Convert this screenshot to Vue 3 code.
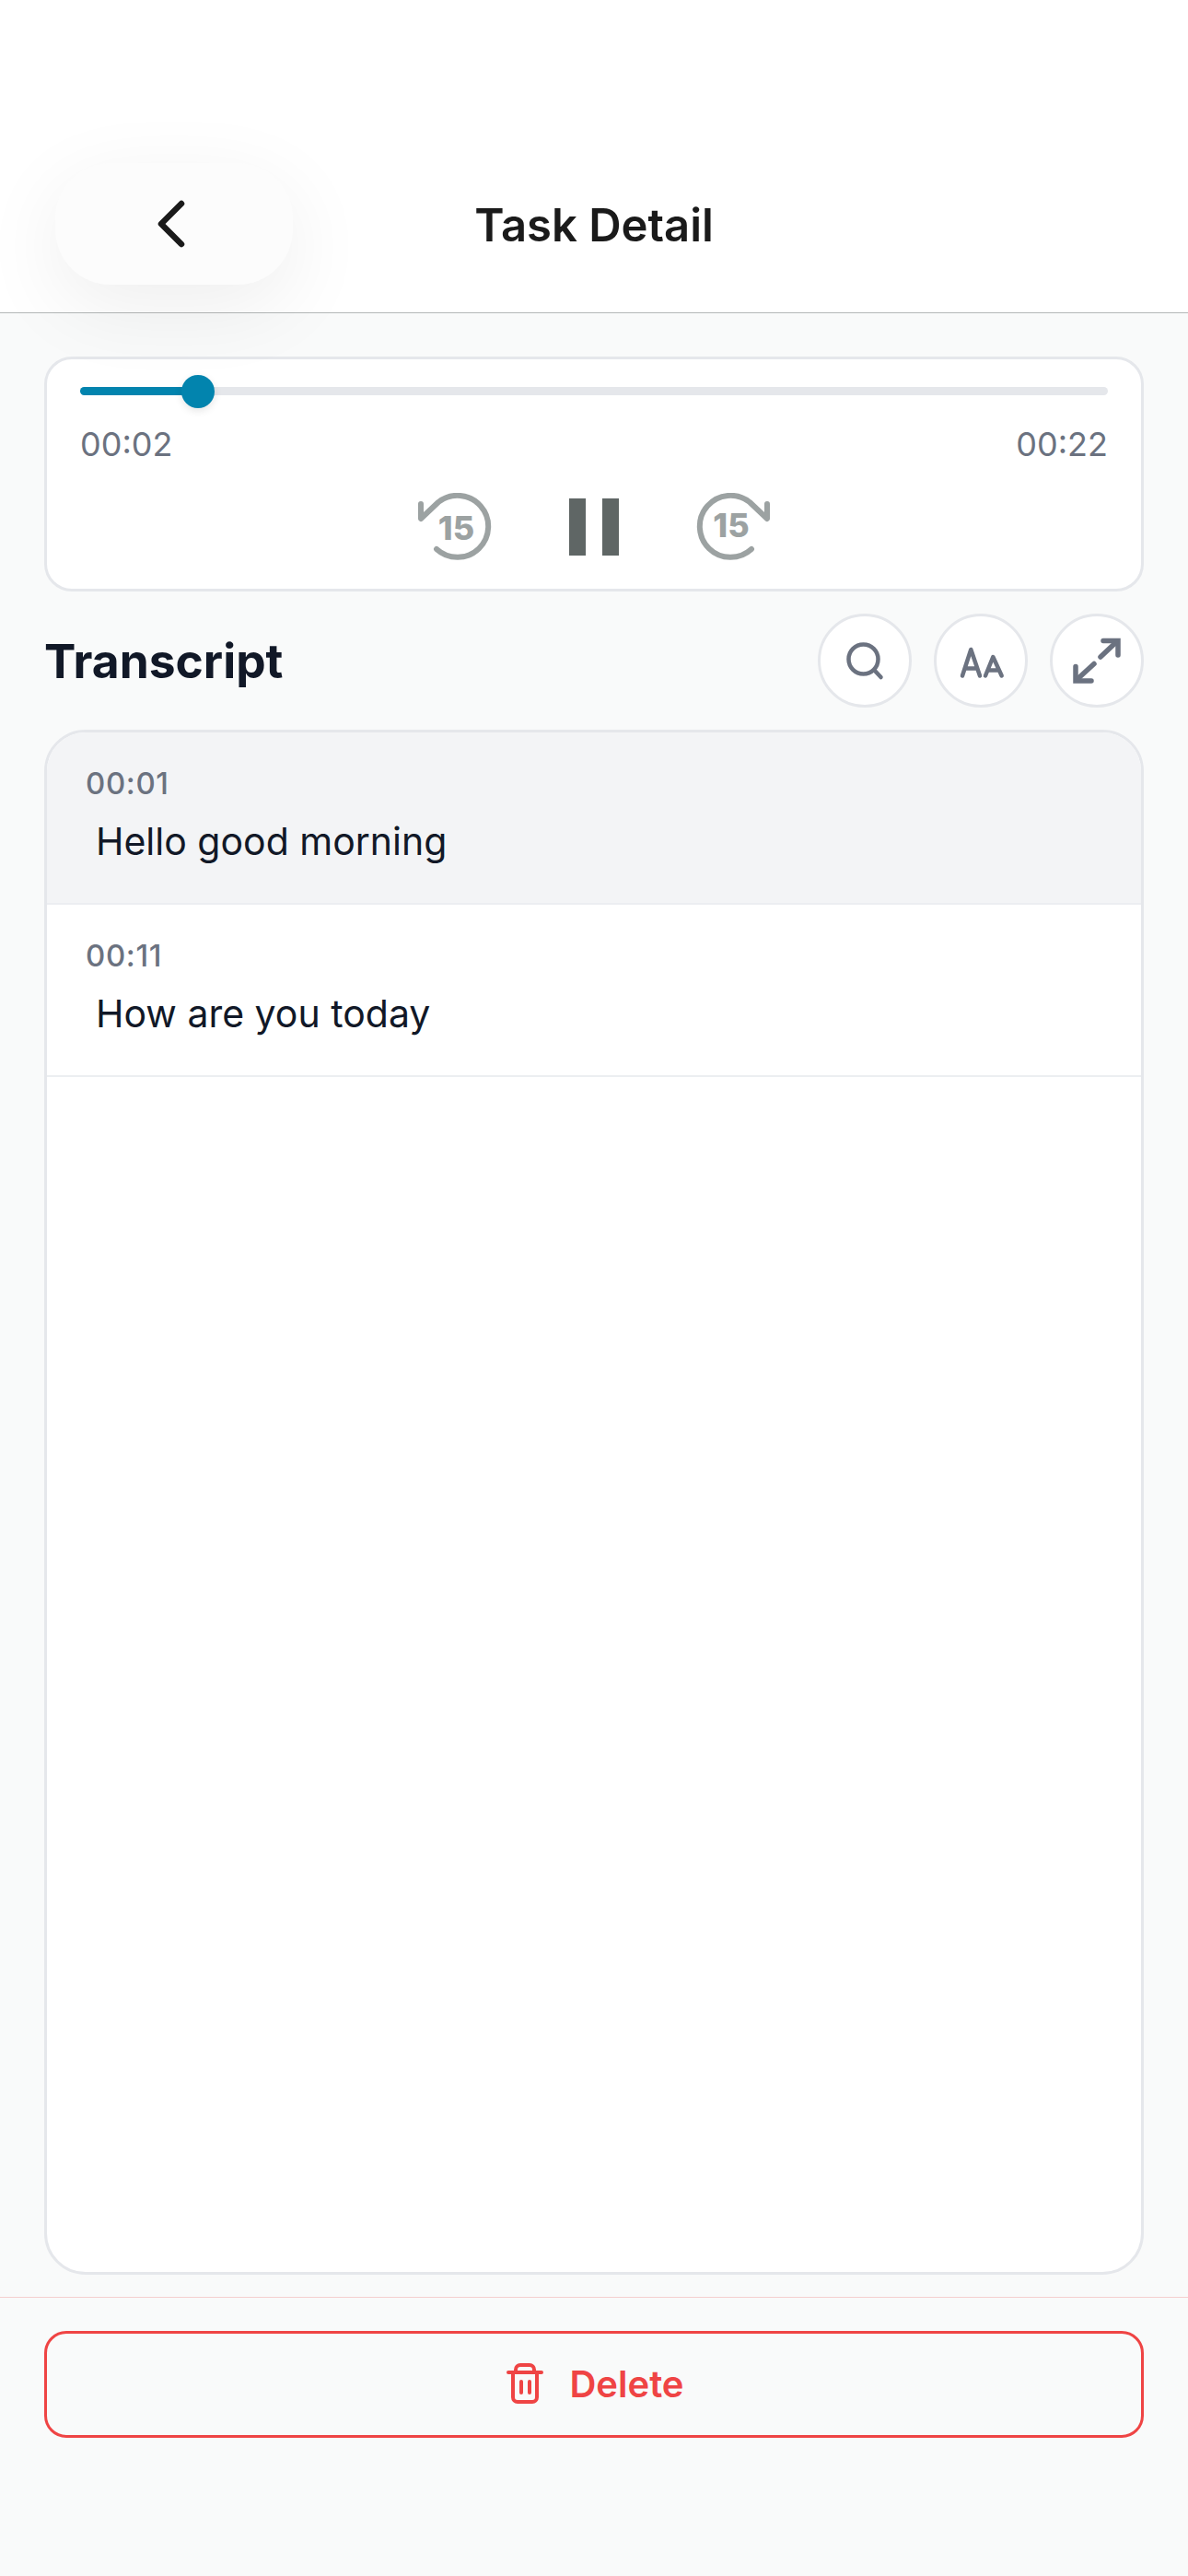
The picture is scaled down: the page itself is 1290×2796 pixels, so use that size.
<template>
  <div class="screen">
    <header class="header">
      <button class="back-btn">
        <svg width="36" height="56" viewBox="0 0 36 56" fill="none">
          <path d="M30 6 L8 28 L30 50" stroke="#1a1a1a" stroke-width="6.5" stroke-linecap="round" stroke-linejoin="round" />
        </svg>
      </button>
      <h1 class="title">Task Detail</h1>
      <div></div>
    </header>

    <main class="content">
      <section class="player">
        <div class="track">
          <div class="track-fill" :style="{ width: progress + 'px' }"></div>
          <div class="track-thumb" :style="{ left: progress - 18 + 'px' }"></div>
        </div>
        <div class="times">
          <span>00:02</span>
          <span>00:22</span>
        </div>
        <div class="controls">
          <svg class="skip" width="81" height="74" viewBox="0 0 81 74" fill="none">
            <path d="M21 61 A33.5 33.5 0 1 0 23 10 L4 28 L4 12" stroke="#9ca2a2" stroke-width="6" stroke-linecap="round" stroke-linejoin="round" />
            <text x="42.5" y="51" class="skip-label">15</text>
          </svg>
          <div class="pause">
            <span></span>
            <span></span>
          </div>
          <svg class="skip" width="81" height="74" viewBox="0 0 81 74" fill="none">
            <path d="M60 61 A33.5 33.5 0 1 1 58 10 L77 28 L77 12" stroke="#9ca2a2" stroke-width="6" stroke-linecap="round" stroke-linejoin="round" />
            <text x="38" y="48" class="skip-label">15</text>
          </svg>
        </div>
      </section>

      <div class="transcript-head">
        <h2>Transcript</h2>
        <div class="tools">
          <button class="tool">
            <svg width="60" height="60" viewBox="0 0 60 60" fill="none" stroke="#6b7280" stroke-linecap="round" stroke-linejoin="round">
              <circle cx="28.5" cy="28.5" r="16" stroke-width="4.5" />
              <path d="M40.5 40.5 L47.5 48" stroke-width="4.5" />
            </svg>
          </button>
          <button class="tool">
            <svg width="60" height="60" viewBox="0 0 60 60" fill="none" stroke="#6b7280" stroke-width="4.5" stroke-linecap="round" stroke-linejoin="round">
              <path d="M10 46.5 L19.3 18 L29 46.5 M13 38.5 H26" />
              <path d="M35 46.5 L43.3 26 L52.7 46.5 M38 40.5 H50" />
            </svg>
          </button>
          <button class="tool">
            <svg width="60" height="60" viewBox="0 0 60 60" fill="none" stroke="#6b7280" stroke-width="5.5" stroke-linecap="round">
              <path d="M37 8.5 H53 V24" />
              <path d="M34 26 L51 10" />
              <path d="M7 36.5 V52 H24" />
              <path d="M27 33.5 L9 50" />
            </svg>
          </button>
        </div>
      </div>

      <section class="transcript">
        <div v-for="(line, index) in lines" :key="line.time" class="line" :class="{ active: index === 0 }">
          <div class="line-time">{{ line.time }}</div>
          <div class="line-text">{{ line.text }}</div>
        </div>
      </section>
    </main>

    <footer class="footer">
      <button class="delete-btn">
        <svg width="40" height="44" viewBox="0 0 40 44" fill="none" stroke="#ef4444" stroke-width="4" stroke-linecap="round" stroke-linejoin="round">
          <path d="M2 10 H38" />
          <path d="M10 10 V7 A5 5 0 0 1 15 2 H25 A5 5 0 0 1 30 7 V10" />
          <path d="M7 10 V37 A5 5 0 0 0 12 42 H28 A5 5 0 0 0 33 37 V10" />
          <path d="M16 20 V32 M25 20 V32" />
        </svg>
        <span>Delete</span>
      </button>
    </footer>
  </div>
</template>

<script setup>
const progress = 128

const lines = [
  { time: '00:01', text: 'Hello good morning' },
  { time: '00:11', text: 'How are you today' }
]
</script>

<style scoped>
.screen {
  width: 1290px;
  height: 2796px;
  display: flex;
  flex-direction: column;
  background: #f9fafa;
  font-family: Inter, "Liberation Sans", sans-serif;
  overflow: hidden;
}

button {
  font-family: inherit;
  padding: 0;
}

.header {
  position: relative;
  z-index: 2;
  height: 340px;
  box-sizing: border-box;
  padding: 177px 60px 0;
  display: grid;
  grid-template-columns: 1fr auto 1fr;
  align-items: start;
  background: #fff;
  border-bottom: 1px solid #b4b8b8;
}

.back-btn {
  width: 258px;
  height: 132px;
  display: flex;
  align-items: center;
  justify-content: center;
  padding-right: 8px;
  border: none;
  border-radius: 60px;
  background: #fcfcfc;
  box-shadow: 0 24px 90px rgba(0, 0, 0, 0.07);
}

.title {
  margin: 0;
  height: 132px;
  line-height: 135px;
  font-size: 49px;
  font-weight: 600;
  color: #1a1a1a;
}

.content {
  flex: 1;
  min-height: 0;
  display: flex;
  flex-direction: column;
  padding: 47px 48px 0;
}

.player {
  height: 255px;
  box-sizing: border-box;
  padding: 30px 36px 0;
  background: #fff;
  border: 3px solid #e5e7eb;
  border-radius: 30px;
}

.track {
  position: relative;
  height: 9px;
  border-radius: 5px;
  background: #e5e7eb;
}

.track-fill {
  height: 100%;
  border-radius: 5px;
  background: #0284ae;
}

.track-thumb {
  position: absolute;
  top: -13.5px;
  width: 36px;
  height: 36px;
  border-radius: 50%;
  background: #0284ae;
  box-shadow: 0 3px 9px rgba(0, 0, 0, 0.1);
}

.times {
  display: flex;
  justify-content: space-between;
  margin-top: 31px;
  font-size: 36px;
  line-height: 44px;
  color: #6b7280;
}

.controls {
  display: flex;
  align-items: center;
  justify-content: center;
  gap: 84px;
  margin-top: 31px;
}

.skip {
  flex: none;
}

.skip-label {
  font-size: 36px;
  font-weight: 800;
  fill: #9ca2a2;
  text-anchor: middle;
}

.pause {
  display: flex;
  gap: 18px;
}

.pause span {
  width: 18px;
  height: 62px;
  background: #5f6665;
}

.transcript-head {
  display: flex;
  align-items: center;
  justify-content: space-between;
  margin-top: 24px;
}

.transcript-head h2 {
  margin: 0;
  font-size: 51.5px;
  font-weight: 700;
  color: #111827;
}

.tools {
  display: flex;
  gap: 24px;
}

.tool {
  width: 102px;
  height: 102px;
  display: flex;
  align-items: center;
  justify-content: center;
  background: #fff;
  border: 3px solid #e5e7eb;
  border-radius: 50%;
}

.transcript {
  flex: 1;
  min-height: 0;
  margin-top: 24px;
  overflow: hidden;
  background: #fff;
  border: 3px solid #e5e7eb;
  border-radius: 45px;
}

.line {
  height: 187px;
  box-sizing: border-box;
  padding: 33px 0 0 42px;
  border-bottom: 2px solid #eceef1;
}

.line.active {
  background: #f3f4f6;
}

.line-time {
  font-size: 33px;
  line-height: 44px;
  font-weight: 500;
  letter-spacing: 0.6px;
  color: #6b7280;
}

.line-text {
  margin-top: 11px;
  padding-left: 11px;
  font-size: 41px;
  line-height: 60px;
  color: #111827;
}

.footer {
  height: 303px;
  box-sizing: border-box;
  margin-top: 24px;
  padding: 36px 48px 0;
  border-top: 1px solid #f4cfcf;
}

.delete-btn {
  width: 100%;
  height: 116px;
  display: flex;
  align-items: center;
  justify-content: center;
  gap: 28px;
  padding-left: 3px;
  padding-bottom: 2px;
  background: transparent;
  border: 3px solid #ef4444;
  border-radius: 24px;
  font-size: 40px;
  font-weight: 600;
  color: #ef4444;
}
</style>
